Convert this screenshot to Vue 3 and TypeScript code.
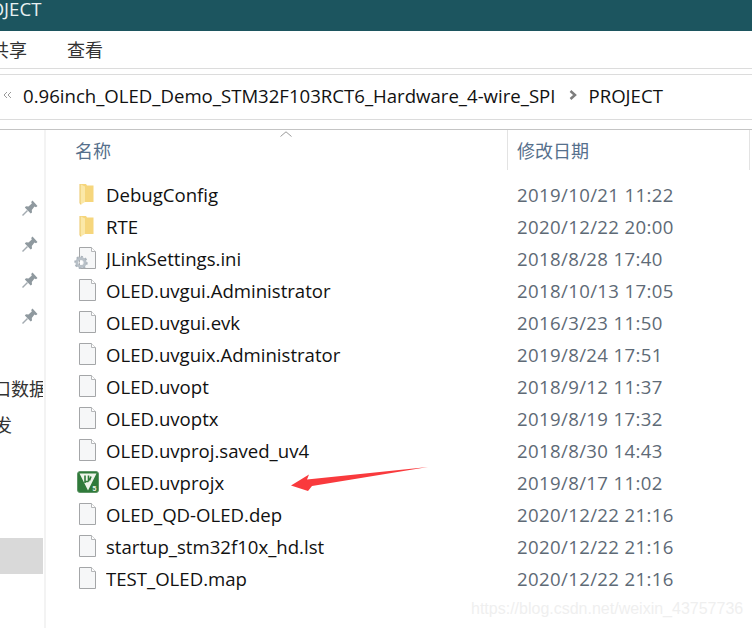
<script setup lang="ts">
type Kind = 'folder' | 'file' | 'ini' | 'uv'
interface Row { name: string; date: string; kind: Kind }
const rows: Row[] = [
  { name: 'DebugConfig', date: '2019/10/21 11:22', kind: 'folder' },
  { name: 'RTE', date: '2020/12/22 20:00', kind: 'folder' },
  { name: 'JLinkSettings.ini', date: '2018/8/28 17:40', kind: 'ini' },
  { name: 'OLED.uvgui.Administrator', date: '2018/10/13 17:05', kind: 'file' },
  { name: 'OLED.uvgui.evk', date: '2016/3/23 11:50', kind: 'file' },
  { name: 'OLED.uvguix.Administrator', date: '2019/8/24 17:51', kind: 'file' },
  { name: 'OLED.uvopt', date: '2018/9/12 11:37', kind: 'file' },
  { name: 'OLED.uvoptx', date: '2019/8/19 17:32', kind: 'file' },
  { name: 'OLED.uvproj.saved_uv4', date: '2018/8/30 14:43', kind: 'file' },
  { name: 'OLED.uvprojx', date: '2019/8/17 11:02', kind: 'uv' },
  { name: 'OLED_QD-OLED.dep', date: '2020/12/22 21:16', kind: 'file' },
  { name: 'startup_stm32f10x_hd.lst', date: '2020/12/22 21:16', kind: 'file' },
  { name: 'TEST_OLED.map', date: '2020/12/22 21:16', kind: 'file' },
]
const pins = [0, 1, 2, 3]
</script>

<template>
  <div class="window">
    <header class="title"><span class="title-text">PROJECT</span></header>
    <nav class="ribbon">
      <span class="tab-share">共享</span>
      <span class="tab-view">查看</span>
    </nav>
    <div class="address">
      <svg class="chev-double" width="10" height="8" viewBox="0 0 10 8">
        <path d="M4 1 1 4l3 3M8 1 5 4l3 3" fill="none" stroke="#9a9a9a" stroke-width="1" />
      </svg>
      <span class="crumb">0.96inch_OLED_Demo_STM32F103RCT6_Hardware_4-wire_SPI</span>
      <svg class="chev" width="8" height="10" viewBox="0 0 8 10">
        <path d="M1.500 1 6 5 1.500 9" fill="none" stroke="#7d7d7d" stroke-width="2.500" />
      </svg>
      <span class="crumb">PROJECT</span>
    </div>
    <div class="body">
      <aside class="side">
        <div v-for="p in pins" :key="p" class="side-row">
          <svg class="pin" width="16" height="16" viewBox="0 0 16 16">
            <path d="M.5 15.500 5.500 10.500" stroke="#a4abb1" stroke-width="1.400" fill="none" />
            <path d="M10.500.5 15.500 6 14 7.200 12.500 6.500 9.800 10 10 12.500 8.700 13.500 2.800 7.500 4 6.200 6.500 6.500 9.800 3.500 9.200 2z" fill="#8f999f" />
          </svg>
        </div>
        <div class="side-row"></div>
        <div class="side-row side-text"><span class="clip-a">窗口数据</span></div>
        <div class="side-row side-text"><span class="clip-b">开发</span></div>
        <div class="side-gap"></div>
        <div class="side-row selected"></div>
      </aside>
      <main class="list">
        <div class="head">
          <svg class="sort" width="12" height="6" viewBox="0 0 12 6">
            <path d="M.5 5.500 6 .8l5.500 4.700" fill="none" stroke="#9a9a9a" stroke-width="1" />
          </svg>
          <div class="head-name">名称</div>
          <div class="head-date">修改日期</div>
        </div>
        <div class="rows">
          <div v-for="r in rows" :key="r.name" class="row">
            <div class="icon">
              <svg v-if="r.kind === 'folder'" class="folder" width="16" height="22" viewBox="0 0 16 22">
                <path d="M1 1h6l1 1.500h6.500V19H6z" fill="#f6d67c" />
                <path d="M1 1l5 2.500V19l-4.200 2.500L1 20z" fill="#fbe8a8" />
                <path d="M1 1v19l.8 1.500" fill="none" stroke="#eac564" stroke-width="1" />
              </svg>
              <svg v-else-if="r.kind === 'uv'" class="uv" width="22" height="22" viewBox="0 0 22 22">
                <rect x=".5" y=".5" width="21" height="21" rx="2.500" fill="#2f7a3a" stroke="#5f9667" />
                <path d="M2.500 2.500h17L11 19.500z" fill="#eef5ea" />
                <path d="M8 4.500v7.500M8 10.500h3.500M11.500 4.500v6M14 5.500l-1.500 4" stroke="#2f7a3a" stroke-width="1.600" fill="none" />
                <text x="15.500" y="20" class="uv-five">5</text>
              </svg>
              <svg v-else class="doc" width="26" height="22" viewBox="0 0 26 22">
                <path d="M5.500.5h12l4 4v17h-16z" fill="#f6f7f8" stroke="#a4a6a8" />
                <path d="M17.500.5v4h4" fill="#fff" stroke="#b5b7b9" />
                <g v-if="r.kind === 'ini'">
                  <circle cx="7" cy="15.500" r="4.100" fill="none" stroke="#b9c1c8" stroke-width="3" />
                  <circle cx="7" cy="15.500" r="5.800" fill="none" stroke="#aab3bb" stroke-width="1.800" stroke-dasharray="2.200 2.200" />
                  <circle cx="7" cy="15.500" r="1.500" fill="#fff" />
                </g>
              </svg>
            </div>
            <div class="name">{{ r.name }}</div>
            <div class="date">{{ r.date }}</div>
          </div>
        </div>
      </main>
    </div>
    <svg class="arrow" width="142" height="30" viewBox="0 0 142 30">
      <path d="M1 19.500 19 8.500 17 13.500 138 1 22 20 18 25z" fill="#f93a3d" />
    </svg>
    <span class="watermark">https://blog.csdn.net/weixin_43757736</span>
  </div>
</template>

<style>
html, body { margin: 0; background: #fff; }
</style>

<style scoped>
.window {
  position: relative;
  width: 752px;
  height: 628px;
  overflow: hidden;
  background: #fff;
  font-family: "Open Sans", "Noto Sans CJK SC", sans-serif;
  font-size: 18.6px;
  color: #111;
}
.title {
  height: 31px;
  background: #1c555f;
  display: flex;
  align-items: center;
  overflow: hidden;
}
.title-text {
  margin-left: -33px;
  margin-top: -15px;
  color: #e8f0f1;
}
.ribbon {
  height: 38px;
  border-bottom: 1px solid #dcdcdc;
  display: flex;
  align-items: center;
  font-family: "Noto Sans CJK SC", sans-serif;
  font-size: 18px;
  color: #333;
  overflow: hidden;
  padding-bottom: 1px;
  box-sizing: border-box;
}
.tab-share { margin-left: -9px; }
.tab-view { margin-left: 40px; }
.address {
  margin-top: 5px;
  height: 46px;
  border-top: 1px solid #dcdcdc;
  border-bottom: 1px solid #dcdcdc;
  display: flex;
  align-items: center;
  padding-left: 3px;
  padding-bottom: 4px;
  box-sizing: border-box;
}
.chev-double { margin-right: 10px; }
.crumb { white-space: nowrap; }
.chev { margin: 0 11px 0 14px; }
.body {
  margin-top: 9px;
  border-top: 1px solid #c4c4c4;
  display: flex;
  height: 498px;
}
.side {
  width: 46px;
  box-sizing: border-box;
  flex: none;
  padding-top: 60px;
  padding-right: 1px;
  border-right: 2px solid #f3f3f3;
}
.side-row {
  height: 36px;
  display: flex;
  align-items: center;
  justify-content: flex-end;
  overflow: hidden;
}
.side-gap { height: 96px; }
.pin { margin-right: 5px; }
.side-text {
  justify-content: flex-start;
  font-family: "Noto Sans CJK SC", sans-serif;
  font-size: 18px;
  color: #333;
}
.clip-a { margin-left: -25px; white-space: nowrap; }
.clip-b { margin-left: -24px; white-space: nowrap; }
.selected { background: #d9d9d9; }
.list { flex: 1; min-width: 0; }
.head {
  position: relative;
  height: 40px;
  display: flex;
  align-items: center;
  font-family: "Noto Sans CJK SC", sans-serif;
  font-size: 18px;
  color: #56708c;
}
.sort { position: absolute; left: 234px; top: 1px; }
.head-name { width: 459px; padding-left: 29px; box-sizing: border-box; }
.head-date {
  height: 40px;
  line-height: 40px;
  width: 243px;
  box-sizing: border-box;
  padding-left: 9px;
  border-left: 1px solid #e3e3e3;
  border-right: 1px solid #e3e3e3;
  margin-left: 2px;
}
.rows { padding-top: 8px; }
.row {
  height: 32px;
  display: flex;
  align-items: center;
}
.icon {
  width: 60px;
  flex: none;
  display: flex;
}
.folder { margin-left: 33px; }
.uv { margin-left: 31px; }
.doc { margin-left: 28px; }
.uv-five {
  font-family: "Liberation Sans", sans-serif;
  font-size: 7px;
  font-weight: 700;
  fill: #eef5ea;
}
.name { width: 411px; flex: none; white-space: nowrap; overflow: hidden; }
.date { color: #5e6a76; white-space: nowrap; letter-spacing: 0.36px; }
.arrow { position: absolute; left: 290px; top: 466px; }
.watermark {
  position: absolute;
  left: 471px;
  top: 600px;
  font-family: "Liberation Sans", sans-serif;
  font-size: 16px;
  color: #efefef;
  white-space: nowrap;
}
</style>
